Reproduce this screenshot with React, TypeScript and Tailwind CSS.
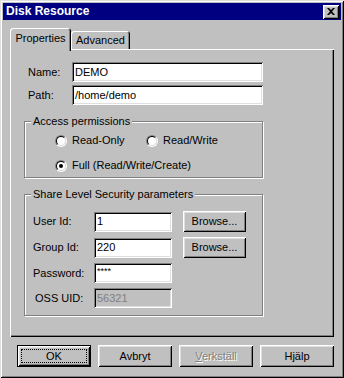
import { FC, ReactNode } from "react";

const raised =
  "shadow-[inset_1px_1px_0_#fff,inset_-1px_-1px_0_#000,inset_2px_2px_0_#dfdfdf,inset_-2px_-2px_0_#808080]";
const sunken =
  "shadow-[inset_1px_1px_0_#808080,inset_-1px_-1px_0_#fff,inset_2px_2px_0_#000,inset_-2px_-2px_0_#dfdfdf]";

const Field: FC<{ value: string; className?: string; disabled?: boolean; small?: boolean }> = ({
  value,
  className = "",
  disabled,
  small,
}) => (
  <div
    className={`h-[20px] flex items-center pl-[3px] ${sunken} ${
      disabled ? "bg-[#c0c0c0] text-[#808080]" : "bg-white text-black"
    } ${className}`}
  >
    <span className={small ? "text-[9px] leading-none -mt-[3px]" : ""}>{value}</span>
  </div>
);

const Button: FC<{ children: ReactNode; className?: string }> = ({ children, className = "" }) => (
  <div className={`h-[21px] flex items-center justify-center bg-[#c0c0c0] ${raised} ${className}`}>
    {children}
  </div>
);

const Radio: FC<{ label: string; checked?: boolean }> = ({ label, checked }) => (
  <div className="flex items-center gap-[5px] h-[13px]">
    <div className="w-[12px] h-[12px] rounded-full border border-t-[#808080] border-l-[#808080] border-b-white border-r-white">
      <div className="w-full h-full rounded-full bg-white border border-t-black border-l-black border-b-[#dfdfdf] border-r-[#dfdfdf] flex items-center justify-center">
        {checked && <div className="w-[4px] h-[4px] rounded-full bg-black" />}
      </div>
    </div>
    <span>{label}</span>
  </div>
);

const Group: FC<{ title: string; className?: string; children: ReactNode }> = ({
  title,
  className = "",
  children,
}) => (
  <fieldset
    className={`border border-[#808080] shadow-[inset_1px_1px_0_#fff,1px_1px_0_#fff] ${className}`}
  >
    <legend className="ml-[6px] px-[2px] bg-[#c0c0c0] leading-[13px]">{title}</legend>
    {children}
  </fieldset>
);

export default function App() {
  return (
    <div
      className={`w-[344px] h-[378px] bg-[#c0c0c0] p-[3px] flex flex-col text-[11px] leading-[13px] text-black font-['Liberation_Sans',Arial,sans-serif] shadow-[inset_1px_1px_0_#dfdfdf,inset_-1px_-1px_0_#000,inset_2px_2px_0_#fff,inset_-2px_-2px_0_#808080]`}
    >
      {/* title bar */}
      <div className="h-[17px] bg-[#000080] flex items-center justify-between pl-[3px] pr-[2px]">
        <span className="text-white font-bold text-[12px]">Disk Resource</span>
        <div className={`w-[16px] h-[14px] bg-[#c0c0c0] flex items-center justify-center ${raised}`}>
          <svg width="8" height="7" viewBox="0 0 8 7">
            <path d="M0 0h2l2 2 2-2h2L5 3.5 8 7H6L4 5 2 7H0l3-3.5z" fill="#000" />
          </svg>
        </div>
      </div>

      <div className="flex-1 flex flex-col px-[7px] pt-[8px]">
        {/* tabs */}
        <div className="h-[21px] flex items-end">
          <div className="relative z-10 -mb-[2px] w-[61px] h-[23px] pt-[4px] text-center bg-[#c0c0c0] rounded-t-[3px] shadow-[inset_1px_1px_0_#fff,inset_-1px_0_0_#000,inset_-2px_0_0_#808080]">
            Properties
          </div>
          <div className="w-[59px] h-[18px] pt-[3px] text-center rounded-t-[3px] shadow-[inset_1px_1px_0_#fff,inset_-1px_0_0_#000,inset_-2px_0_0_#808080]">
            Advanced
          </div>
        </div>

        {/* panel */}
        <div className="h-[288px] flex flex-col pt-[13px] pl-[14px] pr-[71px] shadow-[inset_1px_1px_0_#fff,inset_-1px_-1px_0_#000,inset_-2px_-2px_0_#808080]">
          <div className="flex flex-col gap-[3px] pl-[4px]">
            <div className="flex items-center">
              <span className="w-[44px]">Name:</span>
              <Field value="DEMO" className="flex-1" />
            </div>
            <div className="flex items-center">
              <span className="w-[44px]">Path:</span>
              <Field value="/home/demo" className="flex-1" />
            </div>
          </div>

          <Group title="Access permissions" className="mt-[10px] h-[63px]">
            <div className="flex flex-col gap-[12px] pl-[30px] pt-[6px]">
              <div className="flex">
                <div className="w-[91px]">
                  <Radio label="Read-Only" />
                </div>
                <Radio label="Read/Write" />
              </div>
              <Radio label="Full (Read/Write/Create)" checked />
            </div>
          </Group>

          <Group title="Share Level Security parameters" className="mt-[10px] h-[128px]">
            <div className="flex flex-col gap-[5px] pl-[8px] pt-[10px]">
              <div className="flex items-center">
                <span className="w-[61px]">User Id:</span>
                <Field value="1" className="w-[78px]" />
                <Button className="w-[63px] ml-[11px]">Browse...</Button>
              </div>
              <div className="flex items-center">
                <span className="w-[61px]">Group Id:</span>
                <Field value="220" className="w-[78px]" />
                <Button className="w-[63px] ml-[11px]">Browse...</Button>
              </div>
              <div className="flex items-center">
                <span className="w-[61px]">Password:</span>
                <Field value="****" small className="w-[78px]" />
              </div>
              <div className="flex items-center">
                <span className="w-[61px] pl-[2px]">OSS UID:</span>
                <Field value="56321" disabled className="w-[78px]" />
              </div>
            </div>
          </Group>
        </div>

        {/* buttons */}
        <div className="flex gap-[7px] mt-[8px] pl-[7px]">
          <div className="w-[74px] h-[22px] border border-black">
            <Button className="w-full h-full p-[3px]">
              <span className="w-full h-full flex items-center justify-center border border-dotted border-black">
                OK
              </span>
            </Button>
          </div>
          <Button className="w-[74px] h-[22px]">Avbryt</Button>
          <Button className="w-[74px] h-[22px] text-[#808080] [text-shadow:1px_1px_0_#fff]">
            <span>
              <span className="underline">V</span>erkställ
            </span>
          </Button>
          <Button className="w-[74px] h-[22px]">Hjälp</Button>
        </div>
      </div>
    </div>
  );
}
